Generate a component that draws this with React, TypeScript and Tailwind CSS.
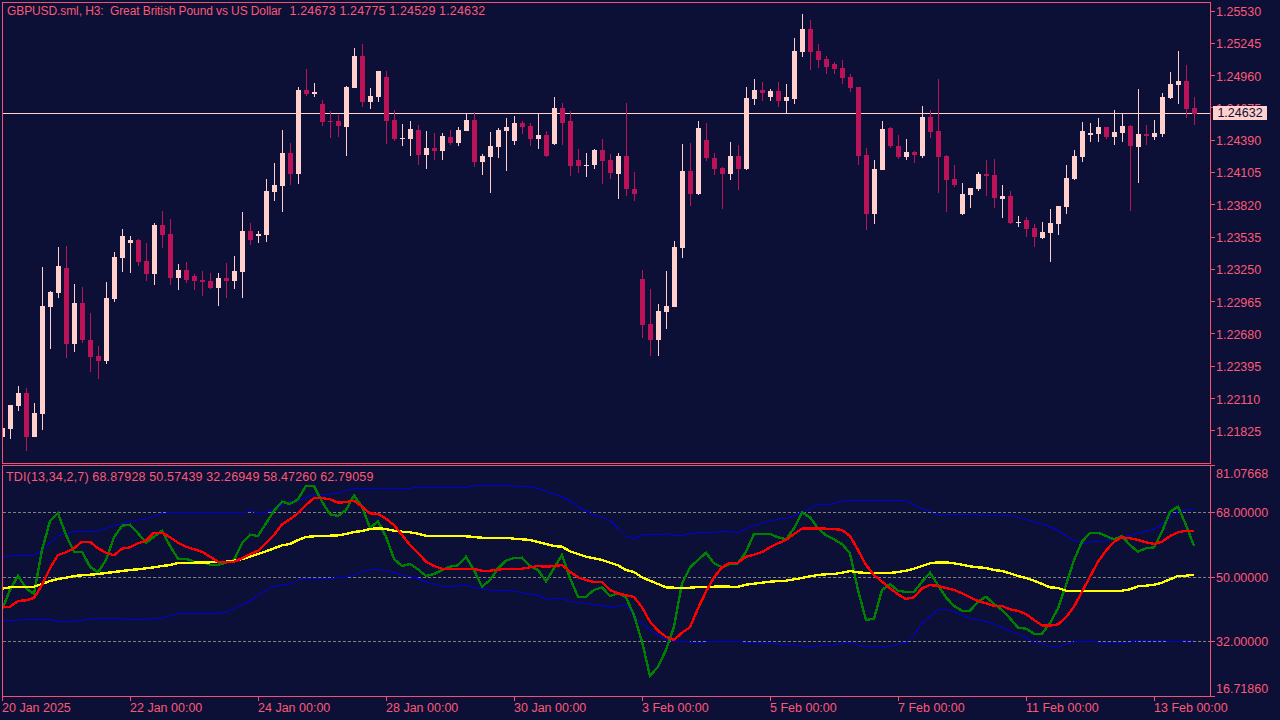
// MT5 style chart: GBPUSD H3 candles with a TDI indicator pane below
type Candle = [high: number, top: number, bottom: number, low: number, up: 0 | 1];

const candles: Candle[] = [
  [425, 428, 437, 437, 1], [405, 405, 429, 439, 1], [386, 393, 406, 411, 1], [388, 393, 437, 451, 0], [403, 413, 437, 437, 1],
  [267, 306, 414, 430, 1], [291, 292, 307, 349, 1], [247, 266, 293, 298, 1], [246, 268, 344, 358, 0], [284, 303, 344, 352, 1],
  [287, 303, 340, 343, 0], [313, 340, 357, 372, 0], [346, 356, 361, 379, 0], [282, 298, 361, 364, 1], [252, 257, 299, 302, 1],
  [229, 236, 258, 272, 1], [236, 240, 243, 273, 1], [239, 240, 262, 266, 0], [243, 261, 274, 281, 0], [223, 225, 274, 285, 1],
  [211, 225, 235, 248, 0], [219, 234, 278, 285, 0], [264, 270, 278, 290, 1], [262, 270, 280, 283, 0], [274, 276, 281, 290, 0],
  [271, 280, 282, 296, 0], [273, 281, 288, 289, 0], [273, 278, 288, 306, 1], [263, 278, 281, 298, 0], [256, 271, 281, 289, 1],
  [212, 231, 272, 298, 1], [223, 231, 240, 245, 0], [231, 234, 236, 243, 1], [179, 191, 235, 242, 1], [163, 185, 192, 201, 1],
  [130, 153, 186, 212, 1], [143, 153, 174, 185, 0], [87, 90, 174, 184, 1], [69, 90, 94, 96, 0], [83, 92, 94, 97, 1],
  [100, 104, 122, 126, 0], [111, 121, 122, 138, 0], [115, 121, 126, 137, 0], [86, 87, 127, 156, 1], [48, 56, 88, 88, 1],
  [44, 56, 102, 107, 0], [88, 96, 102, 109, 1], [71, 71, 97, 102, 1], [71, 77, 121, 144, 0], [110, 120, 139, 141, 0],
  [124, 138, 139, 146, 1], [121, 129, 139, 156, 1], [125, 130, 155, 165, 0], [131, 148, 155, 169, 1], [133, 148, 151, 160, 0],
  [133, 136, 151, 160, 1], [130, 137, 143, 145, 0], [127, 130, 143, 146, 1], [113, 120, 131, 131, 1], [112, 120, 162, 167, 0],
  [154, 156, 162, 175, 1], [132, 146, 157, 193, 1], [128, 130, 147, 158, 1], [118, 127, 131, 171, 1], [116, 123, 141, 145, 1],
  [121, 123, 127, 134, 0], [123, 126, 139, 146, 0], [113, 135, 139, 149, 1], [131, 135, 156, 157, 0], [97, 108, 144, 145, 1],
  [103, 108, 123, 145, 0], [111, 121, 166, 176, 0], [149, 160, 166, 173, 0], [153, 165, 166, 177, 1], [149, 150, 165, 169, 1],
  [139, 150, 161, 184, 0], [154, 160, 173, 179, 0], [153, 156, 174, 199, 1], [103, 156, 189, 196, 0], [172, 189, 194, 201, 0],
  [270, 279, 325, 338, 0], [289, 324, 340, 356, 0], [304, 311, 340, 356, 1], [271, 306, 312, 329, 1], [241, 247, 307, 307, 1],
  [144, 171, 248, 258, 1], [143, 171, 194, 206, 0], [121, 128, 194, 195, 1], [123, 140, 158, 161, 0], [153, 158, 169, 175, 0],
  [167, 168, 174, 209, 0], [142, 156, 174, 180, 1], [145, 156, 169, 190, 0], [87, 98, 169, 170, 1], [79, 90, 99, 105, 1],
  [82, 90, 93, 101, 0], [89, 91, 97, 101, 1], [82, 91, 101, 107, 0], [84, 97, 101, 113, 1], [38, 51, 99, 104, 1],
  [14, 29, 52, 57, 1], [20, 29, 52, 70, 0], [44, 51, 60, 68, 0], [56, 59, 67, 74, 0], [62, 64, 69, 74, 0],
  [60, 68, 78, 84, 0], [74, 77, 88, 92, 0], [87, 87, 156, 165, 0], [148, 155, 214, 230, 0], [160, 169, 214, 224, 1],
  [121, 129, 170, 170, 1], [127, 128, 146, 148, 0], [135, 146, 157, 159, 0], [139, 152, 157, 160, 1], [151, 152, 155, 163, 0],
  [106, 117, 156, 158, 1], [110, 117, 132, 138, 0], [79, 131, 157, 193, 0], [155, 156, 180, 212, 0], [165, 179, 185, 187, 0],
  [183, 194, 214, 215, 1], [188, 188, 195, 208, 1], [172, 174, 189, 191, 1], [160, 174, 176, 196, 0], [159, 175, 198, 208, 0],
  [185, 196, 199, 218, 1], [191, 196, 223, 224, 0], [216, 222, 223, 227, 1], [217, 220, 229, 237, 0], [224, 228, 237, 247, 0],
  [222, 232, 238, 239, 1], [209, 223, 233, 262, 1], [206, 206, 224, 235, 1], [165, 178, 207, 214, 1], [150, 156, 179, 180, 1],
  [122, 131, 157, 162, 1], [123, 133, 135, 142, 1], [118, 127, 134, 142, 1], [127, 127, 137, 139, 0], [110, 132, 137, 145, 1],
  [114, 126, 133, 142, 1], [125, 126, 146, 211, 0], [89, 134, 147, 183, 1], [125, 134, 136, 145, 0], [120, 133, 137, 140, 1],
  [93, 97, 134, 137, 1], [72, 84, 98, 99, 1], [51, 81, 85, 104, 1], [65, 81, 109, 118, 0], [97, 108, 114, 125, 0],
];

// indicator values are read at 1/3 px, one per bar (x = 2 + 8i)
const green = [
  450, 390, 347, 385, 402, 270, 183, 160, 225, 275, 275, 320, 337, 300, 232, 197, 194, 220, 248, 230, 212, 258, 296, 296, 305, 305, 314, 314, 308, 300,
  250, 224, 228, 190, 152, 125, 132, 118, 78, 78, 125, 163, 168, 150, 106, 140, 204, 184, 230, 297, 318, 312, 328, 348,
  342, 330, 320, 316, 290, 330, 380, 360, 325, 302, 294, 293, 318, 330, 364, 325, 285, 355, 410, 410, 390, 382, 408, 400, 412, 465,
  545, 648, 620, 570, 500, 370, 322, 300, 278, 310, 322, 312, 310, 275, 222, 222, 222, 232, 238, 205, 157, 172, 205, 226, 238, 252,
  280, 390, 480, 476, 390, 372, 392, 396, 396, 365, 338, 375, 412, 438, 452, 452, 425, 410, 432, 450, 475, 503, 506, 521, 521, 490,
  445, 375, 300, 245, 218, 218, 228, 238, 228, 255, 275, 265, 262, 215, 155, 140, 195, 258,
];
const red = [
  440, 440, 423, 421, 414, 375, 325, 285, 277, 265, 245, 245, 265, 278, 286, 266, 262, 250, 242, 218, 218, 232, 248, 260, 268, 275, 290, 305, 305, 305,
  295, 283, 272, 250, 225, 193, 178, 160, 135, 114, 114, 118, 128, 126, 122, 140, 160, 162, 176, 195, 225, 255, 278, 305,
  318, 326, 326, 326, 326, 326, 332, 332, 329, 326, 326, 326, 322, 318, 320, 318, 315, 335, 352, 360, 366, 366, 390, 400, 406, 411,
  442, 485, 512, 530, 540, 518, 502, 445, 395, 352, 322, 308, 308, 290, 284, 276, 262, 250, 240, 222, 206, 205, 205, 206, 207, 210,
  228, 270, 315, 345, 365, 385, 403, 417, 412, 385, 375, 378, 384, 390, 400, 412, 423, 430, 437, 438, 448, 453, 462, 480, 496, 497,
  493, 472, 440, 395, 350, 305, 272, 245, 232, 235, 240, 247, 252, 245, 228, 217, 212, 212,
];
const yellow = [
  386, 382, 381, 380, 380, 372, 363, 357, 353, 348, 346, 344, 342, 339, 336, 333, 330, 328, 325, 322, 318, 315, 309, 308, 308, 307, 307, 306, 305, 302,
  297, 290, 282, 274, 265, 256, 252, 240, 231, 229, 227, 227, 226, 222, 216, 213, 207, 205, 207, 212, 215, 217, 221, 227,
  227, 227, 227, 227, 229, 231, 233, 233, 233, 233, 236, 238, 240, 246, 252, 258, 260, 274, 282, 290, 295, 300, 308, 316, 330, 336,
  352, 362, 372, 382, 383, 383, 383, 381, 380, 380, 379, 380, 380, 374, 371, 368, 365, 363, 362, 358, 354, 349, 345, 343, 342, 338,
  333, 337, 339, 339, 339, 339, 336, 332, 326, 318, 310, 307, 307, 310, 314, 319, 322, 324, 330, 333, 340, 348, 354, 362, 372, 382,
  384, 392, 392, 393, 393, 393, 393, 393, 392, 388, 379, 377, 374, 368, 358, 348, 347, 344,
];
const bandUp = [
  292, 288, 287, 287, 287, 268, 248, 228, 220, 215, 214, 214, 213, 205, 197, 190, 183, 180, 178, 168, 160, 158, 158, 157, 157, 157, 157, 157, 157, 157,
  157, 155, 157, 157, 150, 135, 125, 122, 112, 103, 103, 103, 100, 92, 85, 85, 85, 85, 85, 85, 85, 85, 82, 82,
  82, 82, 82, 82, 82, 78, 77, 76, 76, 76, 78, 79, 80, 85, 94, 103, 110, 122, 140, 152, 165, 172, 182, 205, 228, 236,
  224, 224, 224, 221, 226, 226, 222, 217, 217, 217, 215, 215, 217, 207, 197, 190, 182, 178, 175, 168, 155, 145, 134, 133, 131, 123,
  121, 121, 121, 121, 121, 121, 121, 121, 135, 146, 155, 165, 165, 162, 162, 162, 165, 165, 165, 165, 166, 172, 178, 185, 192, 200,
  212, 228, 242, 246, 246, 243, 243, 235, 232, 226, 219, 214, 208, 192, 172, 155, 150, 148,
];
const bandDown = [
  483, 480, 480, 479, 480, 479, 479, 484, 484, 484, 481, 477, 475, 475, 476, 477, 478, 478, 478, 476, 474, 468, 462, 461, 461, 461, 460, 460, 456, 446,
  434, 424, 405, 390, 379, 375, 372, 360, 355, 355, 355, 355, 353, 351, 345, 335, 329, 328, 333, 338, 345, 350, 355, 367,
  372, 378, 380, 378, 376, 382, 386, 390, 391, 391, 394, 398, 402, 406, 418, 414, 417, 424, 428, 431, 433, 437, 442, 438, 434, 470,
  490, 510, 525, 539, 544, 545, 546, 546, 546, 545, 545, 545, 545, 547, 548, 549, 550, 552, 554, 555, 558, 560, 558, 555, 555, 550,
  546, 556, 560, 561, 558, 559, 553, 548, 525, 490, 470, 450, 448, 456, 466, 475, 480, 484, 492, 503, 513, 522, 533, 546, 552, 558,
  560, 552, 546, 544, 544, 547, 547, 547, 547, 547, 540, 540, 540, 541, 545, 544, 542, 542,
];

const prices = [
  "1.25530", "1.25245", "1.24960", "1.24675", "1.24390", "1.24105", "1.23820",
  "1.23535", "1.23250", "1.22965", "1.22680", "1.22395", "1.22110", "1.21825",
];
const times = [
  "20 Jan 2025", "22 Jan 00:00", "24 Jan 00:00", "28 Jan 00:00", "30 Jan 00:00",
  "3 Feb 00:00", "5 Feb 00:00", "7 Feb 00:00", "11 Feb 00:00", "13 Feb 00:00",
];

function toPoints(values: number[]) {
  return values.map((v, i) => `${2 + 8 * i},${(460 + v / 3).toFixed(1)}`).join(" ");
}

function PriceChart() {
  return (
    <svg className="block h-[460px] w-[1207px]" viewBox="3 3 1207 460" shapeRendering="crispEdges">
      <rect x="3" y="113" width="1207" height="1" fill="#ffd0cc" />
      {candles.map(([high, top, bottom, low, up], i) => {
        const x = 2 + 8 * i;
        const fill = up ? "#ffd0cc" : "#bc1258";
        return (
          <g key={i} fill={fill}>
            <rect x={x} y={high} width="1" height={low - high} />
            <rect x={x - 2} y={top} width="5" height={Math.max(bottom - top, 1)} />
          </g>
        );
      })}
    </svg>
  );
}

function IndicatorChart() {
  return (
    <svg className="block h-[230px] w-[1207px]" viewBox="3 466 1207 230" fill="none" shapeRendering="crispEdges">
      {[512.5, 577.5, 641.5].map((y) => (
        <line key={y} x1="3" x2="1210" y1={y} y2={y} stroke="#808080" strokeDasharray="3 2" />
      ))}
      <polyline points={toPoints(bandUp)} stroke="#0000d8" />
      <polyline points={toPoints(bandDown)} stroke="#0000d8" />
      <polyline points={toPoints(green)} stroke="#008000" strokeWidth="2.4" />
      <polyline points={toPoints(yellow)} stroke="#ffff00" strokeWidth="2.4" />
      <polyline points={toPoints(red)} stroke="#ff0000" strokeWidth="2.4" />
    </svg>
  );
}

function AxisLabel({ label }: { label: string }) {
  return (
    <div className="flex h-[14px] items-center">
      <div className="h-px w-1 bg-[#f5506e]" />
      <span className="ml-[1px] pt-[2px]">{label}</span>
    </div>
  );
}

export default function App() {
  return (
    <div className="flex h-[720px] w-[1280px] flex-col overflow-hidden bg-[#0c0f36] pl-[2px] pt-[2px] font-['Liberation_Sans',sans-serif] text-[12.5px] leading-[14px] text-[#fb5a76]">
      <div className="flex h-[462px]">
        <div className="relative w-[1208px] border-y border-l border-[#f5506e]">
          <PriceChart />
          <div className="absolute left-[4px] top-[1px] flex whitespace-pre">
            <span className="text-[12px] tracking-[-0.1px]">GBPUSD.sml, H3:  Great British Pound vs US Dollar</span>
            <span className="ml-[8px] tracking-[0.15px]">1.24673 1.24775 1.24529 1.24632</span>
          </div>
        </div>
        <div className="relative w-[70px] border-l border-[#f5506e] pt-[2px]">
          {prices.map((p) => (
            <div key={p} className="h-[32.31px]">
              <AxisLabel label={p} />
            </div>
          ))}
          <div className="absolute left-[2px] top-[104px] flex h-[14px] w-[54px] items-center justify-center bg-[#ffd0cc] text-[#0c0f36]">
            1.24632
          </div>
        </div>
      </div>

      <div className="mt-px flex h-[232px]">
        <div className="relative w-[1208px] border-y border-l border-[#f5506e]">
          <IndicatorChart />
          <div className="absolute left-[3px] top-[4px] whitespace-pre tracking-[0.15px]">
            TDI(13,34,2,7) 68.87928 50.57439 32.26949 58.47260 62.79059
          </div>
        </div>
        <div className="relative flex w-[70px] flex-col border-l border-[#f5506e]">
          <div className="h-px w-1 bg-[#f5506e]" />
          <div className="ml-[5px] mt-[1px] h-[14px]">81.07668</div>
          <div className="mt-[24px]"><AxisLabel label="68.00000" /></div>
          <div className="mt-[51px]"><AxisLabel label="50.00000" /></div>
          <div className="mt-[50px]"><AxisLabel label="32.00000" /></div>
          <div className="ml-[5px] mt-[34px] h-[14px]">16.71860</div>
          <div className="mt-auto h-px w-1 bg-[#f5506e]" />
        </div>
      </div>

      <div className="flex">
        {times.map((t) => (
          <div key={t} className="w-[128px] shrink-0 whitespace-nowrap">
            <div className="h-1 w-px bg-[#f5506e]" />
            <div>{t}</div>
          </div>
        ))}
      </div>
    </div>
  );
}
